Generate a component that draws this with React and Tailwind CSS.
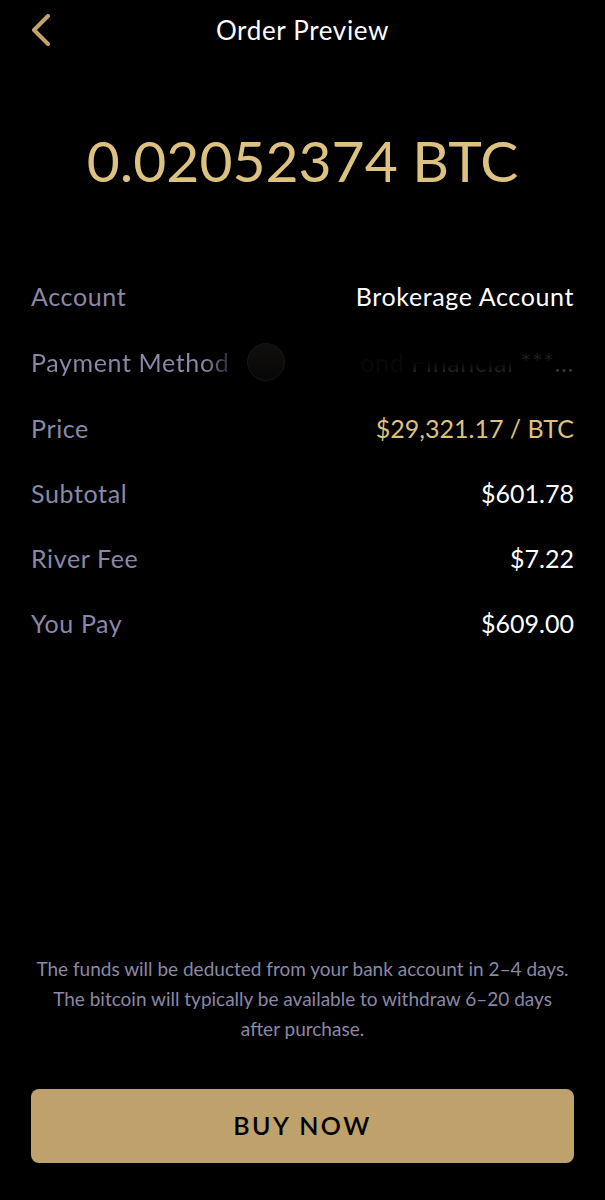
const ROWS = [
  { label: "Account", value: "Brokerage Account" },
  { label: "Payment Method", masked: true },
  { label: "Price", value: "$29,321.17 / BTC", style: "text-[#dcc180] tracking-normal" },
  { label: "Subtotal", value: "$601.78", style: "tracking-normal" },
  { label: "River Fee", value: "$7.22", style: "tracking-normal" },
  { label: "You Pay", value: "$609.00", style: "tracking-normal" },
];

function BackIcon() {
  return (
    <svg width="20" height="32" viewBox="0 0 20 32" fill="none" aria-hidden="true">
      <path
        d="M17 2 3 16l14 14"
        stroke="#c2a36b"
        strokeWidth="4"
        strokeLinecap="round"
        strokeLinejoin="round"
      />
    </svg>
  );
}

// Bank logo and name, dimmed until almost nothing can be read
function MaskedMethod() {
  return (
    <span className="flex items-center justify-between">
      <span className="w-[38px] h-[38px] rounded-full border border-[#161616] bg-linear-to-b from-[#100f0e] to-[#080706]" />
      <span>
        <span className="text-[#080808]">ond </span>
        <span className="bg-linear-to-b from-black from-30% to-[#3a3a3a] bg-clip-text text-transparent">
          Financial
        </span>
        <span className="text-[#1c1c1c]"> ***</span>
        <span className="text-[#333333]">...</span>
      </span>
    </span>
  );
}

export default function App() {
  return (
    <div className="min-h-screen flex flex-col bg-black px-[31px] pb-[37px] font-['Lato',sans-serif] text-[25px] text-white">
      {/* Header */}
      <header className="h-[60px] grid grid-cols-[1fr_auto_1fr] items-center">
        <button type="button" aria-label="Back" className="justify-self-start">
          <BackIcon />
        </button>
        <h1 className="text-[26px] tracking-wide">Order Preview</h1>
      </header>

      {/* Amount */}
      <p className="mt-[64px] text-center text-[57px] leading-[72px] text-[#dcc180]">
        0.02052374 BTC
      </p>

      {/* Order details */}
      <dl className="mt-[82px] flex flex-col gap-[29px] leading-[36px] tracking-wide">
        {ROWS.map(({ label, value, style, masked }) => (
          <div key={label} className="flex items-center justify-between gap-[18px]">
            <dt className="text-[#8a88a6]">
              {masked ? (
                <span className="bg-linear-to-r from-[#8a88a6] from-88% to-[#2a2935] bg-clip-text text-transparent">
                  {label}
                </span>
              ) : (
                label
              )}
            </dt>
            <dd className={masked ? "flex-1" : style}>
              {masked ? <MaskedMethod /> : value}
            </dd>
          </div>
        ))}
      </dl>

      {/* Footer */}
      <footer className="mt-auto pt-10">
        <p className="px-1 text-center text-[19px] leading-[30px] text-[#8a88a6]">
          The funds will be deducted from your bank account in 2–4 days. The
          bitcoin will typically be available to withdraw 6–20 days after
          purchase.
        </p>
        <button
          type="button"
          className="mt-[45px] w-full h-[74px] rounded-lg bg-[#bfa26b] font-semibold tracking-widest text-black"
        >
          BUY NOW
        </button>
      </footer>
    </div>
  );
}
